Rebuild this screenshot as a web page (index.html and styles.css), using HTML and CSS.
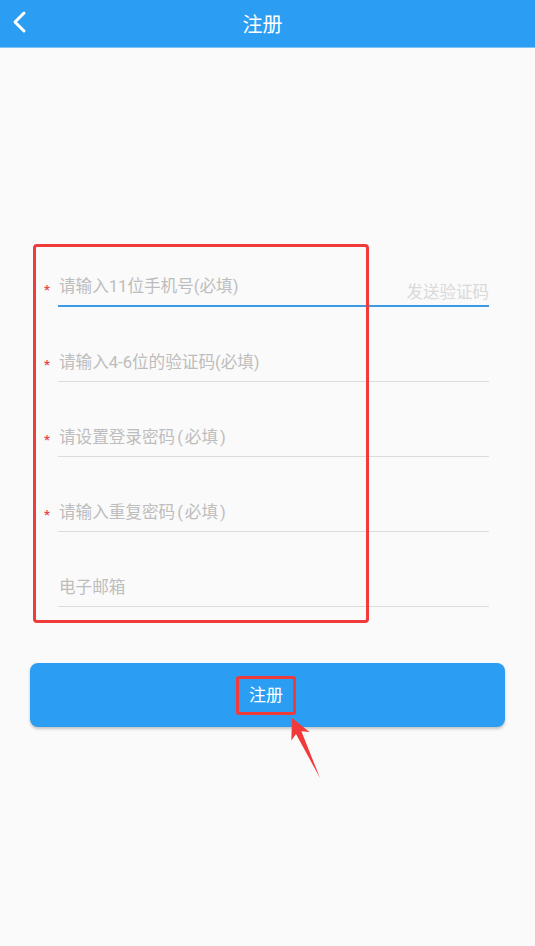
FILE: index.html
```html
<!DOCTYPE html>
<html lang="zh-CN">
<head>
<meta charset="utf-8">
<title>注册</title>
<link rel="stylesheet" href="styles.css">
</head>
<body>
<header class="topbar">
  <svg class="back" width="16" height="24" viewBox="0 0 16 24"><path d="M12 3 L3 12 L12 21" fill="none" stroke="#fff" stroke-width="3" stroke-linecap="round" stroke-linejoin="round"/></svg>
  <h1 class="title">注册</h1>
</header>
<main class="page">
  <form class="form">
    <div class="row">
      <span class="req">*</span>
      <div class="field field-active">
        <span class="ph">请输入11位手机号(必填)</span>
        <span class="send">发送验证码</span>
      </div>
    </div>
    <div class="row">
      <span class="req">*</span>
      <div class="field"><span class="ph">请输入4-6位的验证码(必填)</span></div>
    </div>
    <div class="row">
      <span class="req">*</span>
      <div class="field"><span class="ph">请设置登录密码<span class="paren">(</span>必填<span class="paren">)</span></span></div>
    </div>
    <div class="row">
      <span class="req">*</span>
      <div class="field"><span class="ph">请输入重复密码<span class="paren">(</span>必填<span class="paren">)</span></span></div>
    </div>
    <div class="row">
      <span class="req req-empty"></span>
      <div class="field"><span class="ph">电子邮箱</span></div>
    </div>
    <div class="mark-box"></div>
  </form>
  <div class="btn-wrap">
    <button class="btn" type="button"><span class="btn-label">注册</span></button>
    <svg class="arrow" width="40" height="70" viewBox="280 712 40 70"><polygon points="292,719 309.5,733 301.4,732.3 320,779 296,735 291.3,741.4" fill="#F23A3A"/></svg>
  </div>
</main>
</body>
</html>
```
FILE: styles.css
```css
* { box-sizing: border-box; }
html, body {
  margin: 0;
  padding: 0;
  background: #FAFAFA;
  font-family: "Roboto", "Noto Sans CJK SC", "Noto Sans", sans-serif;
}
body { width: 535px; height: 946px; overflow: hidden; }

.topbar {
  height: 48px;
  background: #2B9EF4;
  border-bottom: 1px solid #7FC4F7;
  display: flex;
  align-items: center;
  justify-content: center;
  position: relative;
}
.back {
  position: absolute;
  left: 12px;
  top: 10px;
}
.title {
  margin: 0 0 1px 0;
  font-size: 20px;
  font-weight: 400;
  color: #fff;
  padding-right: 10px;
}

.page { display: flex; flex-direction: column; }

.form {
  position: relative;
  margin: 184px 0 0 0;
  padding: 0 46px 0 43px;
  display: flex;
  flex-direction: column;
}
.row {
  display: flex;
  align-items: flex-end;
  height: 75px;
}
.req {
  width: 15px;
  color: #E94848;
  font-size: 13px;
  line-height: 13px;
  height: 13px;
  margin-bottom: 11px;
  padding-left: 1px;
  font-family: "Roboto", sans-serif;
  font-weight: 700;
}
.req-empty { visibility: hidden; }
.field {
  flex: 1;
  height: 75px;
  border-bottom: 1px solid #DCDCDC;
  display: flex;
  align-items: flex-end;
  justify-content: space-between;
  padding-bottom: 6px;
}
.field-active {
  border-bottom: 2px solid #3B9BE6;
}
.ph {
  font-size: 16.6px;
  line-height: 24px;
  color: #BDBDBD;
  padding-left: 1px;
}
.paren { margin: 0 2px; }
.send {
  font-size: 16.5px;
  line-height: 24px;
  color: #D9D9D9;
  margin-bottom: -6px;
}

.mark-box {
  position: absolute;
  left: 33px;
  top: 12px;
  width: 336px;
  height: 379px;
  border: 3px solid #F03B3B;
  border-radius: 4px;
  pointer-events: none;
}

.btn-wrap {
  position: relative;
  padding: 56px 30px 0 30px;
}
.btn {
  width: 100%;
  height: 64px;
  border: none;
  border-radius: 8px;
  background: #2B9EF4;
  box-shadow: 0 2px 3px rgba(0,0,0,0.22);
  display: flex;
  align-items: center;
  justify-content: center;
  padding: 0;
  font-family: inherit;
}
.btn-label {
  display: inline-block;
  border: 3px solid #F03B3B;
  border-radius: 3px;
  padding: 0 10px;
  height: 39px;
  line-height: 32px;
  font-size: 17px;
  color: #fff;
  margin-right: 3px;
}
.arrow {
  position: absolute;
  left: 280px;
  top: 104px;
}
```
